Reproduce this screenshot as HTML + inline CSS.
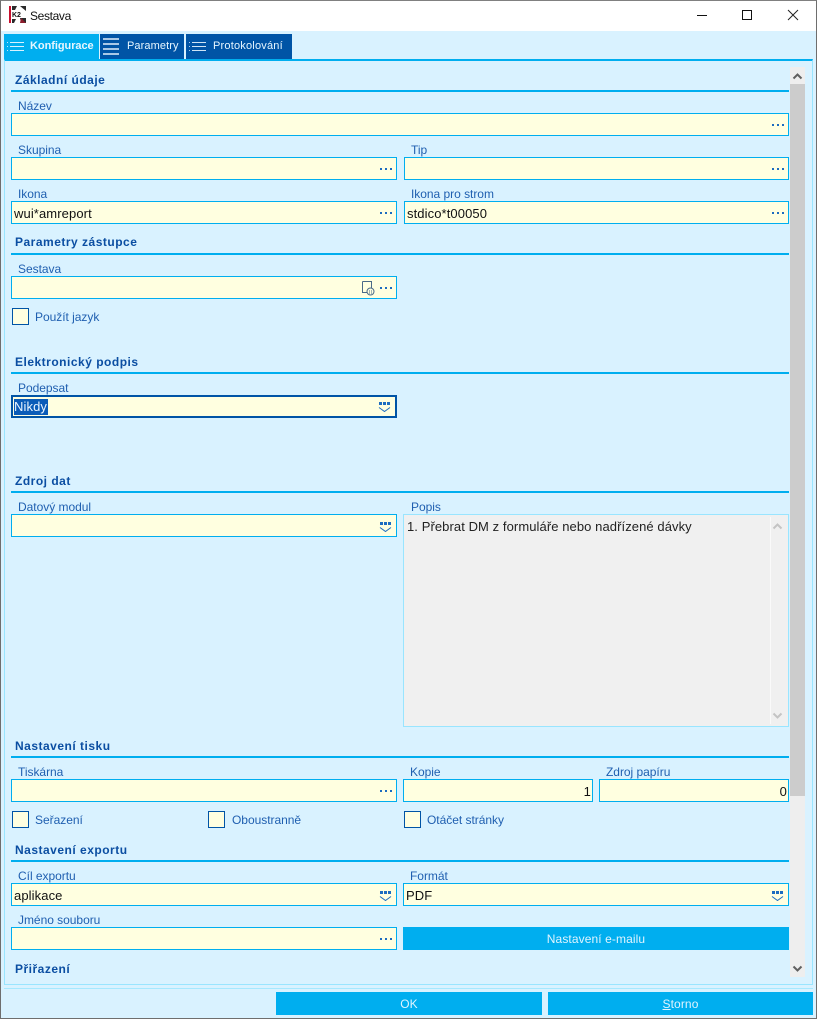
<!DOCTYPE html>
<html><head><meta charset="utf-8"><style>
html,body{margin:0;padding:0}
body{width:817px;height:1019px;overflow:hidden;position:relative;background:#d9f2ff;font-family:"Liberation Sans",sans-serif}
div,svg,span.a{position:absolute;box-sizing:border-box}
.h{font-weight:bold;font-size:12px;color:#0b4ea2;left:15px;line-height:14px;letter-spacing:.5px;white-space:nowrap}
.ln{left:11px;width:778px;height:2px;background:#00aeef}
.l{font-size:12px;color:#1f5fb0;line-height:14px;letter-spacing:-.03px;white-space:nowrap}
.f{background:#ffffe0;border:1px solid #00aeef;height:23px}
.t{font-size:13px;color:#111;line-height:15px;left:2px;top:4px;white-space:nowrap;letter-spacing:.1px}
.d{width:12px;height:3px;right:4px;top:10px}
.c{width:17px;height:17px;border:1px solid #0054a6;background:#ffffe0}
.tab{top:34px;height:25px;color:#e6f6ff;font-weight:bold;font-size:11px;line-height:25px;white-space:nowrap;letter-spacing:0}
.b{background:#00aeef;color:#dff4ff;font-size:12px;text-align:center;line-height:24px;height:23px;letter-spacing:.1px}
.dd{width:15px;height:11px;right:3px;top:6px}
</style></head><body>
<!-- window frame -->
<div style="left:0;top:0;width:817px;height:1019px;border:1px solid #6e6e6e;border-top-color:#808080;z-index:9"></div>
<div style="left:0;top:0;width:817px;height:31px;background:#fff"></div>
<svg style="left:9px;top:6px" width="17" height="17" viewBox="0 0 17 17"><rect width="17" height="17" fill="#fff"/><rect width="2" height="17" fill="#c8102e"/><path d="M3 0h5l-2 4H3zM11 0h6v5zM3 13h4l-2 4H3zM11 12l6 0v5h-5z" fill="#2a2a2a"/><path d="M12 12l5 5h-6z" fill="#8c1c2c"/><text x="3" y="11" font-size="7" font-weight="bold" fill="#111" font-family="Liberation Sans">K2</text></svg>
<div style="left:30px;top:9px;font-size:12px;line-height:15px;color:#111;letter-spacing:-.35px">Sestava</div>
<svg style="left:690px;top:8px" width="120" height="16" viewBox="0 0 120 16"><path d="M7 7.500h10" stroke="#111" fill="none"/><rect x="52.500" y="2.500" width="9" height="9" fill="none" stroke="#111"/><path d="M98 2l10 10M108 2L98 12" stroke="#222" fill="none"/></svg>

<!-- tabs -->
<div class="tab" style="left:4px;width:95px;background:#00aeef"><span class="a" style="left:26px;letter-spacing:-.05px">Konfigurace</span>
<svg style="left:3px;top:7px" width="17" height="11"><path d="M0 1.500h1M0 5.500h1M0 9.500h1" stroke="#bdeaff"/><path d="M3 1.500h14M3 5.500h14M3 9.500h14" stroke="#d9f2ff"/></svg></div>
<div class="tab" style="left:100px;width:84px;background:#0054a6"><span class="a" style="left:27px;font-weight:normal;font-size:11px;letter-spacing:.1px">Parametry</span>
<svg style="left:3px;top:4px" width="16" height="17"><path d="M0 1h16M0 6h16M0 11h16M0 16h16" stroke="#a9c8e6" stroke-width="2"/></svg></div>
<div class="tab" style="left:186px;width:106px;background:#0054a6"><span class="a" style="left:27px;font-weight:normal;font-size:11px;letter-spacing:.2px">Protokolování</span>
<svg style="left:3px;top:7px" width="17" height="11"><path d="M0 1.500h1M0 5.500h1M0 9.500h1" stroke="#a9c8e6"/><path d="M3 1.500h14M3 5.500h14M3 9.500h14" stroke="#cfe4f5"/></svg></div>

<!-- panel -->
<div style="left:4px;top:59px;width:809px;height:926px;border:1px solid #99e5ff;border-top:2px solid #00aeef"></div>
<div style="left:4px;top:988px;width:809px;height:1px;background:#a5e8ff"></div>

<!-- scrollbar -->
<div style="left:790px;top:67px;width:15px;height:910px;background:#eee"></div>
<div style="left:790px;top:84px;width:15px;height:712px;background:#ccc"></div>
<svg style="left:792px;top:72px" width="11" height="8"><path d="M1.500 6.500L5.500 2.500L9.500 6.500" fill="none" stroke="#606060" stroke-width="2"/></svg>
<svg style="left:792px;top:965px" width="11" height="8"><path d="M1.500 1.500L5.500 5.500L9.500 1.500" fill="none" stroke="#606060" stroke-width="2"/></svg>

<!-- Základní údaje -->
<div class="h" style="top:73px">Základní údaje</div><div class="ln" style="top:90px"></div>
<div class="l" style="left:18px;top:99px">Název</div>
<div class="f" style="left:11px;top:113px;width:778px"><svg class="d" viewBox="0 0 12 3"><path d="M0 0h2v2H0zM5 0h2v2H5zM10 0h2v2h-2z" fill="#1c6cc0"/></svg></div>

<div class="l" style="left:18px;top:143px">Skupina</div>
<div class="f" style="left:11px;top:157px;width:386px"><svg class="d" viewBox="0 0 12 3"><path d="M0 0h2v2H0zM5 0h2v2H5zM10 0h2v2h-2z" fill="#1c6cc0"/></svg></div>
<div class="l" style="left:411px;top:143px">Tip</div>
<div class="f" style="left:404px;top:157px;width:385px"><svg class="d" viewBox="0 0 12 3"><path d="M0 0h2v2H0zM5 0h2v2H5zM10 0h2v2h-2z" fill="#1c6cc0"/></svg></div>

<div class="l" style="left:18px;top:187px">Ikona</div>
<div class="f" style="left:11px;top:201px;width:386px"><div class="t">wui*amreport</div><svg class="d" viewBox="0 0 12 3"><path d="M0 0h2v2H0zM5 0h2v2H5zM10 0h2v2h-2z" fill="#1c6cc0"/></svg></div>
<div class="l" style="left:411px;top:187px">Ikona pro strom</div>
<div class="f" style="left:404px;top:201px;width:385px"><div class="t">stdico*t00050</div><svg class="d" viewBox="0 0 12 3"><path d="M0 0h2v2H0zM5 0h2v2H5zM10 0h2v2h-2z" fill="#1c6cc0"/></svg></div>

<!-- Parametry zástupce -->
<div class="h" style="top:235px">Parametry zástupce</div><div class="ln" style="top:253px"></div>
<div class="l" style="left:18px;top:262px">Sestava</div>
<div class="f" style="left:11px;top:276px;width:386px">
<svg style="left:349px;top:4px" width="14" height="15"><path d="M1.500.5h9v7M1.500.5v11h5" fill="none" stroke="#4a6a88"/><circle cx="9.500" cy="10.500" r="3.500" fill="#ffffe0" stroke="#4a6a88"/><path d="M8 10h1M10 10h1M8 12h1M10 12h1" stroke="#4a6a88"/></svg>
<svg class="d" viewBox="0 0 12 3"><path d="M0 0h2v2H0zM5 0h2v2H5zM10 0h2v2h-2z" fill="#1c6cc0"/></svg></div>
<div class="c" style="left:12px;top:308px"></div>
<div class="l" style="left:35px;top:310px">Použít jazyk</div>

<!-- Elektronický podpis -->
<div class="h" style="top:355px">Elektronický podpis</div><div class="ln" style="top:372px"></div>
<div class="l" style="left:18px;top:381px">Podepsat</div>
<div class="f" style="left:11px;top:395px;width:386px;border:2px solid #0054a6">
<div style="left:1px;top:2px;width:34px;height:16px;background:#0a5cb8;color:#e8f4ff;font-size:13px;line-height:16px;letter-spacing:.1px">Nikdy</div>
<svg class="dd" style="right:3px;top:4px" viewBox="0 0 15 11"><path d="M2 1h3v3H2zM6 1h3v3H6zM10 1h3v3h-3z" fill="#1c6cc0"/><path d="M2 6.500L7.500 10.500L13 6.500" fill="none" stroke="#1c6cc0"/></svg></div>

<!-- Zdroj dat -->
<div class="h" style="top:474px">Zdroj dat</div><div class="ln" style="top:491px"></div>
<div class="l" style="left:18px;top:500px">Datový modul</div>
<div class="f" style="left:11px;top:514px;width:386px"><svg class="dd" viewBox="0 0 15 11"><path d="M2 1h3v3H2zM6 1h3v3H6zM10 1h3v3h-3z" fill="#1c6cc0"/><path d="M2 6.500L7.500 10.500L13 6.500" fill="none" stroke="#1c6cc0"/></svg></div>
<div class="l" style="left:411px;top:500px">Popis</div>
<div style="left:403px;top:514px;width:386px;height:213px;background:#f0f0f0;border:1px solid #99e5ff">
<div class="t" style="left:3px;top:4px;color:#222;letter-spacing:.08px">1. Přebrat DM z formuláře nebo nadřízené dávky</div>
<div style="left:366px;top:2px;width:1px;height:207px;background:#fafafa"></div>
<svg style="left:368px;top:7px" width="11" height="8"><path d="M1.500 6.500L5.500 2.500L9.500 6.500" fill="none" stroke="#c4c4c4" stroke-width="2"/></svg>
<svg style="left:368px;top:197px" width="11" height="8"><path d="M1.500 1.500L5.500 5.500L9.500 1.500" fill="none" stroke="#c4c4c4" stroke-width="2"/></svg>
</div>

<!-- Nastavení tisku -->
<div class="h" style="top:739px">Nastavení tisku</div><div class="ln" style="top:756px"></div>
<div class="l" style="left:18px;top:765px">Tiskárna</div>
<div class="f" style="left:11px;top:779px;width:386px"><svg class="d" viewBox="0 0 12 3"><path d="M0 0h2v2H0zM5 0h2v2H5zM10 0h2v2h-2z" fill="#1c6cc0"/></svg></div>
<div class="l" style="left:410px;top:765px">Kopie</div>
<div class="f" style="left:403px;top:779px;width:190px"><div class="t" style="left:auto;right:1px">1</div></div>
<div class="l" style="left:606px;top:765px">Zdroj papíru</div>
<div class="f" style="left:599px;top:779px;width:190px"><div class="t" style="left:auto;right:1px">0</div></div>
<div class="c" style="left:12px;top:811px"></div><div class="l" style="left:35px;top:813px">Seřazení</div>
<div class="c" style="left:208px;top:811px"></div><div class="l" style="left:232px;top:813px">Oboustranně</div>
<div class="c" style="left:404px;top:811px"></div><div class="l" style="left:427px;top:813px">Otáčet stránky</div>

<!-- Nastavení exportu -->
<div class="h" style="top:843px">Nastavení exportu</div><div class="ln" style="top:860px"></div>
<div class="l" style="left:18px;top:869px">Cíl exportu</div>
<div class="f" style="left:11px;top:883px;width:386px"><div class="t">aplikace</div><svg class="dd" viewBox="0 0 15 11"><path d="M2 1h3v3H2zM6 1h3v3H6zM10 1h3v3h-3z" fill="#1c6cc0"/><path d="M2 6.500L7.500 10.500L13 6.500" fill="none" stroke="#1c6cc0"/></svg></div>
<div class="l" style="left:410px;top:869px">Formát</div>
<div class="f" style="left:403px;top:883px;width:386px"><div class="t">PDF</div><svg class="dd" viewBox="0 0 15 11"><path d="M2 1h3v3H2zM6 1h3v3H6zM10 1h3v3h-3z" fill="#1c6cc0"/><path d="M2 6.500L7.500 10.500L13 6.500" fill="none" stroke="#1c6cc0"/></svg></div>
<div class="l" style="left:18px;top:913px">Jméno souboru</div>
<div class="f" style="left:11px;top:927px;width:386px"><svg class="d" viewBox="0 0 12 3"><path d="M0 0h2v2H0zM5 0h2v2H5zM10 0h2v2h-2z" fill="#1c6cc0"/></svg></div>
<div class="b" style="left:403px;top:927px;width:386px">Nastavení e-mailu</div>
<div class="h" style="top:962px">Přiřazení</div>

<!-- footer buttons -->
<div class="b" style="left:276px;top:992px;width:266px">OK</div>
<div class="b" style="left:548px;top:992px;width:265px"><u>S</u>torno</div>
</body></html>
